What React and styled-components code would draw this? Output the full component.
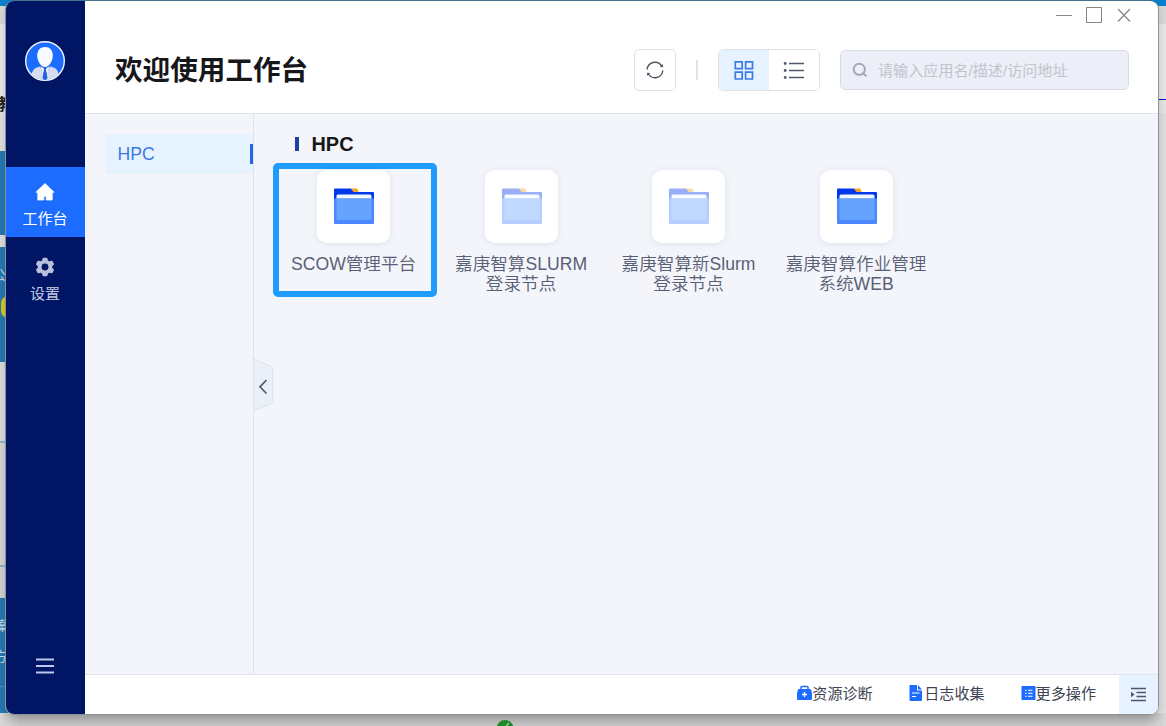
import React from 'react';
import styled, { createGlobalStyle, css } from 'styled-components';

const GlobalStyle = createGlobalStyle`
  * { box-sizing: border-box; }
  html, body { margin: 0; height: 100%; overflow: hidden; }
  body { font-family: "Liberation Sans", "Noto Sans CJK SC", sans-serif; color: #4e5569; }
  svg { display: block; }
  button { font: inherit; color: inherit; padding: 0; border: 0; background: none; }
`;

/* ---------- desktop behind the window ---------- */

const Desktop = styled.div`
  position: relative;
  width: 1166px;
  height: 726px;
  overflow: hidden;
  display: flex;
  justify-content: space-between;
  background: linear-gradient(#3f6f93 0, #3f6f93 1px, #bdbdbd 1px, #bdbdbd 714px, #acacac 714px, #c6c6c6 100%);
`;

const LeftPage = styled.div`
  width: 20px;
  height: 726px;
  display: flex;
  flex-direction: column;
`;

const Band = styled.div`
  flex: none;
  height: ${(p) => p.$h}px;
  background: ${(p) => p.$c};
`;

const Snippet = styled.div`
  flex: none;
  width: 6px;
  height: ${(p) => p.$h}px;
  background: ${(p) => p.$bg};
  color: ${(p) => p.$c};
  font-size: ${(p) => p.$size}px;
  font-weight: ${(p) => p.$weight || 400};
  line-height: ${(p) => p.$h}px;
  overflow: hidden;
  white-space: nowrap;
  text-indent: ${(p) => p.$shift || 0}px;
`;

const YellowPill = styled.div`
  flex: none;
  height: 22px;
  background: #2478b2;
  &::before {
    content: '';
    display: block;
    margin-left: 1px;
    height: 22px;
    border-radius: 7px;
    background: #d8cb20;
  }
`;

const RightPage = styled.div`
  width: 20px;
  height: 726px;
  display: flex;
  flex-direction: column;
`;

const LinkEdge = styled.div`
  flex: none;
  align-self: flex-end;
  width: 8px;
  height: 14px;
  border-top: 1px solid #1010d0;
  border-left: 1px solid #3565a8;
  background: #e4e5e6;
`;

const Shade = styled.div`
  flex: none;
  height: 13px;
  background: linear-gradient(${(p) => p.$to}, #d8d8d8, rgba(190, 190, 190, 0));
`;

const StatusDot = styled.div`
  position: absolute;
  left: 496px;
  top: 720px;
`;

/* ---------- window shell ---------- */

const Window = styled.div`
  position: absolute;
  left: 6px;
  top: 1px;
  width: 1152px;
  height: 713px;
  display: flex;
  border-radius: 8px;
  overflow: hidden;
  background: #fff;
`;

const WindowFrame = styled.div`
  position: absolute;
  left: 5px;
  top: 0;
  width: 1154px;
  height: 715px;
  border-radius: 9px;
  border: 1px solid #8f9294;
  border-top-color: #46708f;
  box-shadow: 0 2px 10px rgba(0, 0, 0, 0.16);
`;

const Rail = styled.nav`
  width: 79px;
  background: #001665;
  display: flex;
  flex-direction: column;
  align-items: center;
  padding: 40px 1px 0 0;
`;

const Avatar = styled.div`
  width: 40px;
  height: 40px;
  margin-bottom: 86px;
`;

const RailItem = styled.div`
  width: 79px;
  margin-right: -1px;
  padding-right: 1px;
  height: ${(p) => (p.$active ? 70 : 76)}px;
  display: flex;
  flex-direction: column;
  align-items: center;
  padding-top: ${(p) => (p.$active ? 15 : 20)}px;
  gap: ${(p) => (p.$active ? 5.5 : 6)}px;
  font-size: 15px;
  line-height: 22px;
  color: ${(p) => (p.$active ? '#fff' : '#c3c9e2')};
  background: ${(p) => (p.$active ? '#1c6dff' : 'transparent')};
`;

const RailMenu = styled.button`
  margin-top: auto;
  margin-bottom: 40px;
`;

const Main = styled.div`
  flex: 1;
  display: flex;
  flex-direction: column;
`;

/* ---------- header ---------- */

const Header = styled.header`
  height: 113px;
  border-bottom: 1px solid #dfe2ea;
  display: flex;
  flex-direction: column;
`;

const WindowControls = styled.div`
  height: 28px;
  display: flex;
  justify-content: flex-end;
  align-items: center;
  gap: 14px;
  padding-right: 26px;
`;

const HeaderRow = styled.div`
  height: 82px;
  display: flex;
  align-items: center;
  padding: 0 29px 0 30px;
`;

const Title = styled.h1`
  margin: 0 auto 0 0;
  padding-top: 2px;
  font-size: 27.6px;
  line-height: 40px;
  font-weight: 700;
  color: #16171a;
`;

const boxed = css`
  border: 1px solid #e1e2e6;
  border-radius: 5px;
  background: #fff;
`;

const RefreshButton = styled.button`
  ${boxed}
  width: 42px;
  height: 42px;
  display: grid;
  place-items: center;
`;

const Divider = styled.div`
  width: 2px;
  height: 20px;
  margin: 0 20px;
  background: #e2e2e4;
`;

const ViewSwitch = styled.div`
  ${boxed}
  width: 102px;
  height: 42px;
  display: flex;
  overflow: hidden;
  margin-right: 20px;
`;

const ViewOption = styled.button`
  flex: 1;
  display: grid;
  place-items: center;
  background: ${(p) => (p.$active ? '#e6f2ff' : '#fff')};
`;

const SearchBox = styled.label`
  width: 289px;
  height: 40px;
  border: 1px solid #d8dbe2;
  border-radius: 5px;
  background: #eceff8;
  display: flex;
  align-items: center;
  gap: 10px;
  padding-left: 11px;
  font-size: 15.1px;
  color: #c0c4cc;
  white-space: nowrap;
`;

const Placeholder = styled.span`
  padding-bottom: 2px;
`;

/* ---------- body ---------- */

const Body = styled.div`
  flex: 1;
  display: flex;
  background: #f3f5fb;
`;

const Categories = styled.aside`
  width: 169px;
  padding: 20px 0 0 20px;
  border-right: 1px solid #dfe3eb;
`;

const Category = styled.div`
  height: 40px;
  padding-left: 12.6px;
  background: #e6f3ff;
  color: #3a78e8;
  font-size: 17.6px;
  display: flex;
  align-items: center;
  justify-content: space-between;
  &::after {
    content: '';
    width: 3px;
    height: 20px;
    background: #2468e8;
  }
`;

const CollapseHandle = styled.button`
  align-self: flex-start;
  width: 20px;
  height: 54px;
  margin: 244px 0 0 -1px;
`;

const Content = styled.main`
  flex: 1;
  padding-top: 18px;
`;

const SectionTitle = styled.h2`
  margin: 0;
  height: 24px;
  padding-left: 22px;
  display: flex;
  align-items: center;
  gap: 12.5px;
  font-size: 19.9px;
  font-weight: 700;
  color: #16171a;
  &::before {
    content: '';
    width: 4px;
    height: 14px;
    background: #1c3fa6;
  }
`;

const AppGrid = styled.div`
  display: grid;
  grid-template-columns: repeat(4, 167.5px);
  margin: 7px 0 0 -3.2px;
`;

const AppCard = styled.div`
  width: 167.5px;
  display: flex;
  flex-direction: column;
  align-items: center;
  padding-top: 7px;
`;

const Highlight = styled.div`
  grid-area: 1 / 1;
  width: 164px;
  height: 134px;
  margin-left: 3.2px;
  border: 6px solid #1f9cfd;
  border-radius: 5px;
`;

const AppTile = styled.div`
  width: 73px;
  height: 73px;
  border-radius: 10px;
  background: #fff;
  box-shadow: 0 1px 7px rgba(60, 70, 110, 0.1);
  padding: 18px 0 0 17px;
  margin-bottom: 11px;
  svg { opacity: ${(p) => (p.$dim ? 0.4 : 1)}; }
`;

const AppName = styled.div`
  font-size: 17.6px;
  line-height: 20px;
  font-weight: 350;
  text-align: center;
  color: #596075;
  white-space: pre-line;
`;

/* ---------- footer ---------- */

const Footer = styled.footer`
  height: 40px;
  border-top: 1px solid #dfe3eb;
  background: #fff;
  display: flex;
  justify-content: flex-end;
  align-items: stretch;
`;

const FooterAction = styled.div`
  display: flex;
  align-items: center;
  padding-bottom: 5px;
  margin-right: ${(p) => p.$after}px;
  font-size: 15.1px;
  color: #3e4453;
  white-space: nowrap;
`;

const FooterIcon = styled.span`
  margin-top: 1px;
`;

const PanelToggle = styled.button`
  width: 39px;
  background: #e6f2ff;
  display: grid;
  place-items: center;
`;

/* ---------- icons ---------- */

const AvatarIcon = () => (
  <svg width="40" height="40" viewBox="0 0 40 40">
    <defs>
      <clipPath id="face"><circle cx="20" cy="20" r="19" /></clipPath>
    </defs>
    <circle cx="20" cy="20" r="19.3" fill="#1b6cff" stroke="#f4f7ff" strokeWidth="1.4" />
    <g clipPath="url(#face)">
      <path d="M5 40C6 29 10 26 16 25.5L20 28l4-2.5C31 26 34 29 35 40Z" fill="#d5dcef" />
      <path d="M15 25l5 14 5-14Z" fill="#1b6cff" />
      <path d="M15.6 25.5l4.4 2.2-2.4 7ZM24.4 25.5L20 27.7l2.4 7Z" fill="#e7ecf8" />
      <path d="M18.500 26.300h3l-.6 2.300 1.600 8.400-2.500 3-2.500-3 1.600-8.400Z" fill="#2463dd" />
    </g>
    <path d="M20 6c4.700 0 7.800 3.400 7.800 8.400 0 5-3.400 11.500-7.800 11.500s-7.800-6.500-7.800-11.500C12.200 9.400 15.300 6 20 6Z" fill="#f7faff" />
  </svg>
);

const HomeIcon = () => (
  <svg width="20" height="20" viewBox="0 0 20 20" fill="#fff" stroke="#fff" strokeWidth=".8" strokeLinejoin="round">
    <path d="M10 1.500.9 10.300h1.900V18h6v-3.700h2.400V18h6v-7.700h1.900Z" />
  </svg>
);

const GearIcon = () => (
  <svg width="20" height="20" viewBox="0 0 20 20">
    <path
      fillRule="evenodd"
      fill="#b9c0de"
      d="M7.600 1.400Q7.800.7 8.500.7h3q.7 0 .9.700l.6 2 1.300.8 2.100-.5q.7-.1 1 .4l1.400 2.500q.3.6-.1 1.100L17.200 9.200v1.600l1.500 1.500q.4.500.1 1.100l-1.400 2.500q-.3.5-1 .4l-2.100-.5-1.300.8-.6 2q-.2.7-.9.7h-3q-.7 0-.9-.7l-.6-2-1.300-.8-2.100.5q-.7.100-1-.4L1.200 13.400q-.3-.6.1-1.100l1.500-1.500V9.200L1.300 7.700q-.4-.5-.1-1.100L2.600 4.100q.3-.5 1-.4l2.100.5L7 3.400ZM10 6.600a3.400 3.400 0 1 0 0 6.800 3.400 3.400 0 0 0 0-6.800Z"
    />
  </svg>
);

const MenuIcon = () => (
  <svg width="18" height="16" viewBox="0 0 18 16" stroke="#bfc7ee" strokeWidth="1.800">
    <path d="M0 1.500h18M0 8h18M0 14.500h18" />
  </svg>
);

const MinimizeIcon = () => (
  <svg width="16" height="16" viewBox="0 0 16 16" stroke="#858585"><path d="M0 8.500h16" /></svg>
);
const MaximizeIcon = () => (
  <svg width="16" height="16" viewBox="0 0 16 16" fill="none" stroke="#858585"><path d="M.5.500h15v15H.5Z" /></svg>
);
const CloseIcon = () => (
  <svg width="16" height="16" viewBox="0 0 16 16" stroke="#858585" strokeWidth="1.200"><path d="M2 2l12 12.500M14 2L2 14.500" /></svg>
);

const RefreshIcon = () => (
  <svg width="18" height="18" viewBox="0 0 18 18" fill="none" stroke="#4e5666" strokeWidth="1.400">
    <path d="M1.200 8.500A7.800 7.800 0 0 1 15.600 5M16.800 9.500A7.800 7.800 0 0 1 2.400 13" />
    <path d="M16.900 3v3.300l-3.200-.4ZM1.100 15v-3.300l3.200.4Z" fill="#4e5666" stroke="none" />
  </svg>
);

const GridIcon = () => (
  <svg width="20" height="20" viewBox="0 0 20 20" fill="none" stroke="#3b7be6" strokeWidth="1.700">
    <path d="M1.300 1.800H8.200V8.700H1.300ZM11.600 1.800H18.500V8.700h-6.900ZM1.300 12.100H8.200V19H1.300ZM11.600 12.100H18.500V19h-6.900Z" />
  </svg>
);

const ListIcon = () => (
  <svg width="22" height="18" viewBox="0 0 22 18" stroke="#4f586c" strokeWidth="1.300">
    <path d="M6 2.500h15M6 9.500h15M6 16.500h15" />
    <g fill="#4f586c" stroke="none">
      <circle cx="2.200" cy="2.500" r="1.400" />
      <circle cx="2.200" cy="9.500" r="1.400" />
      <circle cx="2.200" cy="16.500" r="1.400" />
    </g>
  </svg>
);

const SearchIcon = () => (
  <svg width="16" height="16" viewBox="0 0 16 16" fill="none" stroke="#a3a8b4" strokeWidth="1.900">
    <circle cx="7.300" cy="7.300" r="5.600" />
    <path d="M11.300 11.300l3.200 3" />
  </svg>
);

const FolderIcon = () => (
  <svg width="40" height="36" viewBox="0 0 40 36">
    <path d="M16 .5h6.500q1.500 0 2 3.500h-6Z" fill="#f5a623" />
    <path d="M0 1.500Q0 .5 1 .5h15q1 0 1.500.8L19.500 4H39q1 0 1 1v8H0Z" fill="#0039ec" />
    <rect x="2.500" y="6.500" width="35" height="12" rx="1.500" fill="#f0f6ff" />
    <path d="M0 10.500h40V35q0 1-1 1H1q-1 0-1-1Z" fill="#4b87ff" />
    <path d="M2.500 10.500h35v20q0 1.500-1.500 1.500H4q-1.500 0-1.500-1.500Z" fill="#65a3ff" />
  </svg>
);

const HandleShape = () => (
  <svg width="20" height="54" viewBox="0 0 20 54" fill="none">
    <path d="M.5 1 17.500 8q2 1 2 3v32q0 2-2 3L.5 53Z" fill="#eaf0f8" stroke="#dde3ec" />
    <path d="M13.500 22 7 28.800l6.500 6.700" stroke="#535b6d" strokeWidth="1.700" />
  </svg>
);

const KitIcon = () => (
  <svg width="15" height="16" viewBox="0 0 15 16">
    <path d="M4 5V2.300Q4 1.500 5 1.500h5q1 0 1 .8V5" fill="none" stroke="#1c6dff" strokeWidth="1.500" />
    <path d="M2 4h11q1 0 1.200 1l.8 3.500V14q0 1-1 1H1q-1 0-1-1V8.500L.8 5Q1 4 2 4Z" fill="#1c6dff" />
    <path d="M7.500 7v5M5 9.500h5" stroke="#fff" strokeWidth="1.300" />
  </svg>
);

const LogIcon = () => (
  <svg width="15" height="16" viewBox="0 0 15 16">
    <path d="M1 0h7v5.500h5V15q0 1-1 1H1.500q-1 0-1-1V1Q.5 0 1 0Z" fill="#1c6dff" />
    <path d="M9 0l4 4.500H9Z" fill="#1c6dff" />
    <path d="M3 8h7.500M3 11.500h4" stroke="#fff" strokeWidth="1.200" />
  </svg>
);

const MoreIcon = () => (
  <svg width="15" height="16" viewBox="0 0 15 16">
    <rect x="0.500" y="1" width="14" height="14" rx="0.800" fill="#1c6dff" />
    <path d="M4 5.200h1.600M7 5.200h4.500M4 8.200h1.600M7 8.200h4.500M4 11.200h1.600M7 11.200h4.500" stroke="#fff" strokeWidth="1.100" />
  </svg>
);

const IndentIcon = () => (
  <svg width="17" height="15" viewBox="0 0 17 15" stroke="#4e5666" strokeWidth="1.300">
    <path d="M1 1.500h15M6.500 5.500H16M6.500 9.500H16M1 13.500h15" />
    <path d="M1 4.700v5.600l3.500-2.800Z" fill="#4e5666" stroke="none" />
  </svg>
);

const apps = [
  { name: 'SCOW管理平台' },
  { name: '嘉庚智算SLURM\n登录节点', dim: true },
  { name: '嘉庚智算新Slurm\n登录节点', dim: true },
  { name: '嘉庚智算作业管理\n系统WEB' },
];

const actions = [
  { label: '资源诊断', Icon: KitIcon, after: 36.5 },
  { label: '日志收集', Icon: LogIcon, after: 36 },
  { label: '更多操作', Icon: MoreIcon, after: 23 },
];

export default function App() {
  return (
    <>
      <GlobalStyle />
      <Desktop>
        <LeftPage>
          <Band $h={6} $c="#0a80ce" />
          <Band $h={18} $c="#d9d9d9" />
          <Band $h={72} $c="#e8e8e8" />
          <Snippet $h={18} $bg="#e3e3e3" $c="#222" $size={16} $weight={700} $shift={-2}>教</Snippet>
          <Band $h={37} $c="#dfdfdf" />
          <Band $h={84} $c="#2478b2" />
          <Band $h={12} $c="#dcdcdc" />
          <Band $h={18} $c="#2478b2" />
          <Snippet $h={20} $bg="#2478b2" $c="#b9d7ea" $size={14} $shift={-8}>公</Snippet>
          <Band $h={11} $c="#2478b2" />
          <YellowPill />
          <Band $h={44} $c="#2478b2" />
          <Band $h={79} $c="#dadada" />
          <Band $h={2} $c="#8fb4d0" />
          <Band $h={122} $c="#d4d4d4" />
          <Band $h={2} $c="#8fb4d0" />
          <Band $h={31} $c="#d0d0d0" />
          <Band $h={18} $c="#2478b2" />
          <Snippet $h={20} $bg="#2478b2" $c="#c9e0ee" $size={13} $shift={-4}>案</Snippet>
          <Band $h={12} $c="#2478b2" />
          <Snippet $h={18} $bg="#2478b2" $c="#c9e0ee" $size={13} $shift={-6}>方</Snippet>
          <Band $h={20} $c="#2478b2" />
          <Band $h={1} $c="#4b91c0" />
          <Band $h={26} $c="#2478b2" />
          <Shade $to="to right" />
        </LeftPage>
        <RightPage>
          <Band $h={6} $c="#0a80ce" />
          <Band $h={18} $c="#d9d9d9" />
          <Band $h={75} $c="#e8e8e8" />
          <LinkEdge />
          <Band $h={600} $c="#dedede" />
          <Shade $to="to left" />
        </RightPage>
        <StatusDot>
          <svg width="18" height="6" viewBox="0 0 18 6">
            <circle cx="9" cy="8.500" r="8.500" fill="#1f8a2c" />
            <path d="M10 6l3-3" stroke="#9fd0a4" strokeWidth="1.300" />
          </svg>
        </StatusDot>
        <WindowFrame />
        <Window>
          <Rail>
            <Avatar><AvatarIcon /></Avatar>
            <RailItem $active><HomeIcon />工作台</RailItem>
            <RailItem><GearIcon />设置</RailItem>
            <RailMenu><MenuIcon /></RailMenu>
          </Rail>
          <Main>
            <Header>
              <WindowControls>
                <MinimizeIcon />
                <MaximizeIcon />
                <CloseIcon />
              </WindowControls>
              <HeaderRow>
                <Title>欢迎使用工作台</Title>
                <RefreshButton><RefreshIcon /></RefreshButton>
                <Divider />
                <ViewSwitch>
                  <ViewOption $active><GridIcon /></ViewOption>
                  <ViewOption><ListIcon /></ViewOption>
                </ViewSwitch>
                <SearchBox>
                  <SearchIcon />
                  <Placeholder>请输入应用名/描述/访问地址</Placeholder>
                </SearchBox>
              </HeaderRow>
            </Header>
            <Body>
              <Categories><Category>HPC</Category></Categories>
              <CollapseHandle><HandleShape /></CollapseHandle>
              <Content>
                <SectionTitle>HPC</SectionTitle>
                <AppGrid>
                  <Highlight />
                  {apps.map((app, i) => (
                    <AppCard key={app.name} style={{ gridArea: `1 / ${i + 1}` }}>
                      <AppTile $dim={app.dim}><FolderIcon /></AppTile>
                      <AppName>{app.name}</AppName>
                    </AppCard>
                  ))}
                </AppGrid>
              </Content>
            </Body>
            <Footer>
              {actions.map(({ label, Icon, after }) => (
                <FooterAction key={label} $after={after}>
                  <FooterIcon><Icon /></FooterIcon>
                  {label}
                </FooterAction>
              ))}
              <PanelToggle><IndentIcon /></PanelToggle>
            </Footer>
          </Main>
        </Window>
      </Desktop>
    </>
  );
}
